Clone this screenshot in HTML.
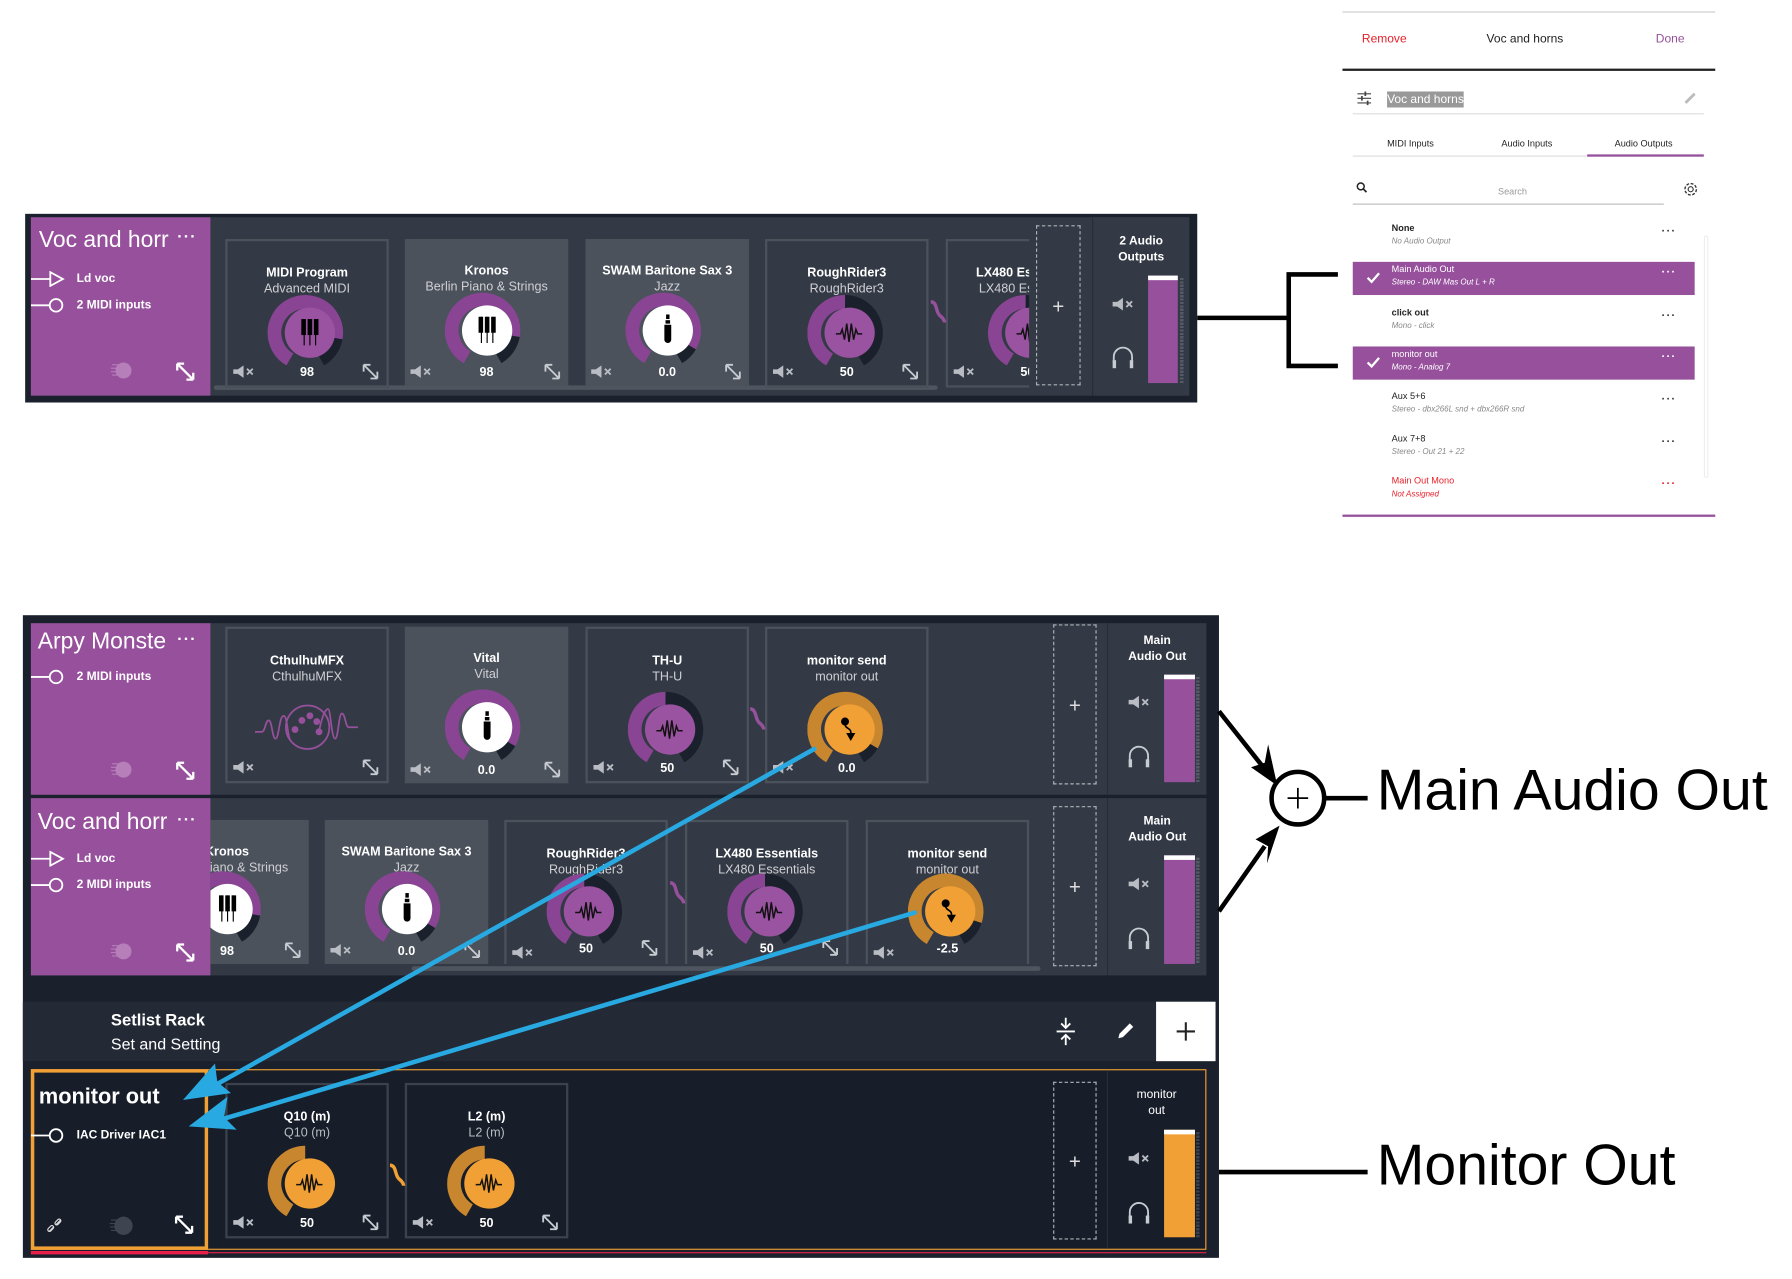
<!DOCTYPE html>
<html><head><meta charset="utf-8"><style>
*{margin:0;padding:0;box-sizing:border-box}
html,body{width:1792px;height:1279px;overflow:hidden;background:#fff}
#w{position:absolute;left:0;top:0;width:1559px;height:1113px;transform:scale(1.1435);transform-origin:0 0;font-family:"Liberation Sans Narrow","Liberation Sans",sans-serif}
.a{position:absolute}
.card{position:absolute;width:143px;text-align:center;color:#fff;overflow:hidden}
.d{background:#333a45;border:2px solid #4b525c}
.d3{background:#171e29;border:2px solid #3b424d}
.l{background:#4b525c}
.t{font-weight:bold;font-size:11px;margin-top:22px;white-space:nowrap}
.s{font-size:11px;color:#d0d0d4;margin-top:2px;white-space:nowrap}
.kn{position:absolute;left:35px;width:70px;height:70px}
.mu{position:absolute;left:4px;bottom:6px;width:20px;height:12px}
.v{position:absolute;left:0;right:0;bottom:5px;font-size:11px;font-weight:bold}
.ex{position:absolute;right:6px;bottom:4px;width:16px;height:16px}
.sb{position:absolute;background:#96509c;color:#fff}
.sb .tt{position:absolute;left:7px;top:9px;font-size:20px;white-space:nowrap}
.sb .dots{position:absolute;right:12px;top:8px;font-size:14px;font-weight:bold;letter-spacing:1px}
.io{position:absolute;left:0;font-size:10.5px;font-weight:bold;white-space:nowrap}
.io svg{vertical-align:middle;margin-right:10px}
.out{position:absolute;text-align:center;color:#fff;font-size:10.5px;font-weight:bold;line-height:14px;border-left:1px solid #262d38}
.add{position:absolute;border:1px dashed #aeb2b8;color:#ddd;font-size:18px;text-align:center}
.rp{position:absolute;font-size:10px;color:#222}
.row{position:absolute;left:1183px;width:299px;height:29px}
.row .n{position:absolute;left:34px;top:2px;font-size:8px;font-weight:bold;color:#222}
.row .i{position:absolute;left:34px;top:15px;font-size:7px;font-style:italic;color:#888}
.row .dd{position:absolute;left:270px;top:4px;font-size:10px;font-weight:bold;color:#333;letter-spacing:1px}
.row.h{background:#96509c}
.row.h .n,.row.h .i,.row.h .dd{color:#fff}
.big{font-family:"Liberation Sans",sans-serif}
</style></head><body><div id="w">

<div class="a" style="left:22px;top:187px;width:1025px;height:165px;background:#1a212c"></div>
<div class="a" style="left:27px;top:190px;width:1013px;height:156px;background:#333a45"></div>
<div class="a" style="left:187px;top:337px;width:633px;height:4px;background:#4e555f;border-radius:2px"></div>
<div class="sb" style="left:27px;top:190px;width:157px;height:156px">
 <div class="tt">Voc and horr</div><div class="dots">···</div>
 <div class="io" style="top:47px"><svg width="30" height="14"><path d="M0 7h17M17 1l11 6-11 6z" stroke="#fff" stroke-width="1.6" fill="none"/></svg>Ld voc</div>
 <div class="io" style="top:70px"><svg width="30" height="14"><path d="M0 7h16" stroke="#fff" stroke-width="1.6"/><circle cx="22" cy="7" r="5.5" stroke="#fff" stroke-width="1.6" fill="none"/></svg>2 MIDI inputs</div>
 <svg class="a" style="left:68px;top:126px" width="22" height="16"><circle cx="13" cy="8" r="7" fill="#b67fba"/><path d="M3 3h6M2 6h6M2 9h6M3 12h6" stroke="#b67fba"/></svg>
 <svg class="a" style="left:126px;top:126px" width="18" height="18"><path d="M2 2L16 16M2 2h6M2 2v6M16 16h-6M16 16v-6" stroke="#fff" stroke-width="2" fill="none"/></svg>
</div>
<div class="card d" style="left:197px;top:209px;height:130px"><div class="t">MIDI Program</div><div class="s">Advanced MIDI</div><div class="kn k p v98 piano pc" style="top:44px"></div><svg class="mu"></svg><div class="v">98</div><svg class="ex"></svg></div>
<div class="card l" style="left:354px;top:209px;height:128px"><div class="t">Kronos</div><div class="s">Berlin Piano &amp; Strings</div><div class="kn k p v98 piano w" style="top:44px"></div><svg class="mu"></svg><div class="v">98</div><svg class="ex"></svg></div>
<div class="card l" style="left:512px;top:209px;height:128px"><div class="t">SWAM Baritone Sax 3</div><div class="s">Jazz</div><div class="kn k p v0 jack w" style="top:44px"></div><svg class="mu"></svg><div class="v">0.0</div><svg class="ex"></svg></div>
<div class="card d" style="left:669px;top:209px;height:130px"><div class="t">RoughRider3</div><div class="s">RoughRider3</div><div class="kn k p v50 wave" style="top:44px"></div><svg class="mu"></svg><div class="v">50</div><svg class="ex"></svg></div>
<div class="a" style="left:827px;top:209px;width:73px;height:130px;overflow:hidden"><div class="card d" style="left:0;top:0;height:130px"><div class="t">LX480 Essentials</div><div class="s">LX480 Essentials</div><div class="kn k p v50 wave" style="top:44px"></div><svg class="mu"></svg><div class="v">50</div><svg class="ex"></svg></div></div>
<svg class="a" style="left:812px;top:262px" width="16" height="22"><path d="M2 2c6 0 4 9 8 12s4 6 4 6" stroke="#96509c" stroke-width="3" fill="none"/></svg>
<div class="add" style="left:906px;top:197px;width:39px;height:140px;line-height:140px">+</div>
<div class="out" style="left:955px;top:190px;width:85px;height:156px;background:#333a45;padding-top:14px">2 Audio<br>Outputs</div>
<svg class="a mu2" style="left:969px;top:259px" width="26" height="14"></svg>
<svg class="a hp" style="left:971px;top:302px" width="22" height="22"></svg>
<div class="a" style="left:1004px;top:241px;width:26px;height:94px;background:#96509c;border-top:4px solid #fff"></div>
<div class="a" style="left:1032px;top:243px;width:3px;height:92px;background:repeating-linear-gradient(#555c66 0 2px,#333a45 2px 3px)"></div>

<div class="a" style="left:1174px;top:10px;width:326px;height:1px;background:#ccc"></div>
<div class="rp" style="left:1191px;top:28px;color:#e8202a;font-size:10.5px">Remove</div>
<div class="rp" style="left:1300px;top:28px;font-size:10.5px">Voc and horns</div>
<div class="rp" style="left:1448px;top:28px;color:#96509c;font-size:10.5px">Done</div>
<div class="a" style="left:1174px;top:60px;width:326px;height:1.5px;background:#222"></div>
<svg class="a" style="left:1187px;top:80px" width="13" height="12"><path d="M0 2h12M0 6h12M0 10h12" stroke="#444"/><path d="M7 0v4M4 4v4M9 8v4" stroke="#444" stroke-width="1.5"/></svg>
<div class="a" style="left:1213px;top:80px;height:14px;background:#999;color:#fff;font-size:10.5px;line-height:14px">Voc and horns</div>
<svg class="a" style="left:1472px;top:80px" width="12" height="12"><path d="M2 10L10 2" stroke="#bbb" stroke-width="2.5"/></svg>
<div class="a" style="left:1183px;top:99px;width:307px;height:1px;background:#ddd"></div>
<div class="rp" style="left:1213px;top:121px;font-size:8px">MIDI Inputs</div>
<div class="rp" style="left:1313px;top:121px;font-size:8px">Audio Inputs</div>
<div class="rp" style="left:1412px;top:121px;font-size:8px">Audio Outputs</div>
<div class="a" style="left:1183px;top:136px;width:307px;height:1px;background:#ddd"></div>
<div class="a" style="left:1388px;top:135px;width:102px;height:2px;background:#96509c"></div>
<svg class="a" style="left:1186px;top:159px" width="10" height="10"><circle cx="4" cy="4" r="3" stroke="#222" stroke-width="1.3" fill="none"/><path d="M6 6l3 3" stroke="#222" stroke-width="1.5"/></svg>
<div class="rp" style="left:1310px;top:163px;font-size:8px;color:#999">Search</div>
<div class="a" style="left:1183px;top:178px;width:272px;height:1px;background:#bbb"></div>
<svg class="a" style="left:1471px;top:158px" width="15" height="15"><circle cx="7.5" cy="7.5" r="5" stroke="#333" stroke-width="1.2" fill="none" stroke-dasharray="2.5 1.4"/><circle cx="7.5" cy="7.5" r="2.2" stroke="#333" stroke-width="1" fill="none"/></svg>
<div class="a" style="left:1490px;top:206px;width:4px;height:212px;border:1px solid #eee;border-radius:2px"></div>
<div class="row" style="top:193px"><div class="n">None</div><div class="i">No Audio Output</div><div class="dd">···</div></div>
<div class="row h" style="top:229px"><svg class="a" style="left:12px;top:9px" width="12" height="10"><path d="M1 5l3.5 3.5L11 1" stroke="#fff" stroke-width="2" fill="none"/></svg><div class="n" style="font-weight:normal">Main Audio Out</div><div class="i">Stereo - DAW Mas Out L + R</div><div class="dd">···</div></div>
<div class="row" style="top:267px"><div class="n">click out</div><div class="i">Mono - click</div><div class="dd">···</div></div>
<div class="row h" style="top:303px"><svg class="a" style="left:12px;top:9px" width="12" height="10"><path d="M1 5l3.5 3.5L11 1" stroke="#fff" stroke-width="2" fill="none"/></svg><div class="n" style="font-weight:normal">monitor out</div><div class="i">Mono - Analog 7</div><div class="dd">···</div></div>
<div class="row" style="top:340px"><div class="n" style="font-weight:normal">Aux 5+6</div><div class="i">Stereo - dbx266L snd + dbx266R snd</div><div class="dd">···</div></div>
<div class="row" style="top:377px"><div class="n" style="font-weight:normal">Aux 7+8</div><div class="i">Stereo - Out 21 + 22</div><div class="dd">···</div></div>
<div class="row" style="top:414px"><div class="n" style="color:#e8202a;font-weight:normal">Main Out Mono</div><div class="i" style="color:#e8202a">Not Assigned</div><div class="dd" style="color:#e8202a">···</div></div>
<div class="a" style="left:1174px;top:450px;width:326px;height:2px;background:#96509c"></div>

<div class="a" style="left:20px;top:538px;width:1046px;height:562px;background:#1a212c"></div>
<div class="a" style="left:27px;top:545px;width:1028px;height:150px;background:#333a45"></div>
<div class="sb" style="left:27px;top:545px;width:157px;height:150px">
 <div class="tt" style="left:6px;top:5px">Arpy Monste</div><div class="dots" style="top:5px">···</div>
 <div class="io" style="top:40px"><svg width="30" height="14"><path d="M0 7h16" stroke="#fff" stroke-width="1.6"/><circle cx="22" cy="7" r="5.5" stroke="#fff" stroke-width="1.6" fill="none"/></svg>2 MIDI inputs</div>
 <svg class="a" style="left:68px;top:120px" width="22" height="16"><circle cx="13" cy="8" r="7" fill="#b67fba"/><path d="M3 3h6M2 6h6M2 9h6M3 12h6" stroke="#b67fba"/></svg>
 <svg class="a" style="left:126px;top:120px" width="18" height="18"><path d="M2 2L16 16M2 2h6M2 2v6M16 16h-6M16 16v-6" stroke="#fff" stroke-width="2" fill="none"/></svg>
</div>
<div class="card d" style="left:197px;top:548px;height:137px"><div class="t">CthulhuMFX</div><div class="s">CthulhuMFX</div>
 <svg class="a" style="left:22px;top:62px" width="100" height="50"><path d="M2 28h6c3 0 3-10 6-10s3 16 6 16 3-20 7-20 3 22 7 22M58 28c3-16 6-20 8-20s3 26 6 26 3-22 6-22 3 12 6 12h8" stroke="#96509c" stroke-width="1.5" fill="none"/><circle cx="48" cy="24" r="19" stroke="#96509c" stroke-width="1.5" fill="none"/><circle cx="43" cy="18" r="3" fill="#96509c"/><circle cx="50" cy="14" r="3" fill="#96509c"/><circle cx="56" cy="19" r="3" fill="#96509c"/><circle cx="37" cy="26" r="3" fill="#96509c"/><circle cx="58" cy="28" r="3" fill="#96509c"/></svg>
 <svg class="mu"></svg><svg class="ex"></svg></div>
<div class="card l" style="left:354px;top:548px;height:137px"><div class="t">Vital</div><div class="s">Vital</div><div class="kn k p v0 jack w" style="top:52px"></div><svg class="mu"></svg><div class="v">0.0</div><svg class="ex"></svg></div>
<div class="card d" style="left:512px;top:548px;height:137px"><div class="t">TH-U</div><div class="s">TH-U</div><div class="kn k p v50 wave" style="top:52px"></div><svg class="mu"></svg><div class="v">50</div><svg class="ex"></svg></div>
<div class="card d" style="left:669px;top:548px;height:137px"><div class="t">monitor send</div><div class="s">monitor out</div><div class="kn k o v0 snd" style="top:52px"></div><svg class="mu"></svg><div class="v">0.0</div><svg class="ex" style="display:none"></svg></div>
<svg class="a" style="left:654px;top:618px" width="16" height="22"><path d="M2 2c6 0 4 9 8 12s4 6 4 6" stroke="#96509c" stroke-width="3" fill="none"/></svg>
<div class="add" style="left:921px;top:546px;width:38px;height:140px;line-height:140px">+</div>
<div class="out" style="left:968px;top:545px;width:87px;height:150px;padding-top:8px">Main<br>Audio Out</div>
<svg class="a mu2" style="left:983px;top:607px" width="26" height="14"></svg>
<svg class="a hp" style="left:985px;top:651px" width="22" height="22"></svg>
<div class="a" style="left:1018px;top:590px;width:27px;height:94px;background:#96509c;border-top:4px solid #fff"></div>
<div class="a" style="left:1046px;top:592px;width:3px;height:92px;background:repeating-linear-gradient(#555c66 0 2px,#333a45 2px 3px)"></div>
<div class="a" style="left:27px;top:698px;width:1028px;height:155px;background:#333a45"></div>
<div class="a" style="left:184px;top:698px;width:726px;height:145px;overflow:hidden">
 <div class="card l" style="left:-57px;top:19px;height:126px"><div class="t">Kronos</div><div class="s">Berlin Piano &amp; Strings</div><div class="kn k p v98 piano w" style="top:42px"></div><svg class="mu"></svg><div class="v">98</div><svg class="ex"></svg></div>
 <div class="card l" style="left:100px;top:19px;height:126px"><div class="t">SWAM Baritone Sax 3</div><div class="s">Jazz</div><div class="kn k p v0 jack w" style="top:42px"></div><svg class="mu"></svg><div class="v">0.0</div><svg class="ex"></svg></div>
 <div class="card d" style="left:257px;top:19px;height:130px"><div class="t">RoughRider3</div><div class="s">RoughRider3</div><div class="kn k p v50 wave" style="top:42px"></div><svg class="mu"></svg><div class="v" style="bottom:9px">50</div><svg class="ex" style="bottom:8px"></svg></div>
 <div class="card d" style="left:415px;top:19px;height:130px"><div class="t">LX480 Essentials</div><div class="s">LX480 Essentials</div><div class="kn k p v50 wave" style="top:42px"></div><svg class="mu"></svg><div class="v" style="bottom:9px">50</div><svg class="ex" style="bottom:8px"></svg></div>
 <div class="card d" style="left:573px;top:19px;height:130px"><div class="t">monitor send</div><div class="s">monitor out</div><div class="kn k o v10 snd" style="top:42px"></div><svg class="mu"></svg><div class="v" style="bottom:9px">-2.5</div></div>
 <svg class="a" style="left:400px;top:72px" width="16" height="22"><path d="M2 2c6 0 4 9 8 12s4 6 4 6" stroke="#96509c" stroke-width="3" fill="none"/></svg>
</div>
<div class="a" style="left:360px;top:845px;width:550px;height:4px;background:#4e555f;border-radius:2px"></div>
<div class="sb" style="left:27px;top:698px;width:157px;height:155px">
 <div class="tt" style="left:6px;top:10px">Voc and horr</div><div class="dots" style="top:10px">···</div>
 <div class="io" style="top:46px"><svg width="30" height="14"><path d="M0 7h17M17 1l11 6-11 6z" stroke="#fff" stroke-width="1.6" fill="none"/></svg>Ld voc</div>
 <div class="io" style="top:69px"><svg width="30" height="14"><path d="M0 7h16" stroke="#fff" stroke-width="1.6"/><circle cx="22" cy="7" r="5.5" stroke="#fff" stroke-width="1.6" fill="none"/></svg>2 MIDI inputs</div>
 <svg class="a" style="left:68px;top:126px" width="22" height="16"><circle cx="13" cy="8" r="7" fill="#b67fba"/><path d="M3 3h6M2 6h6M2 9h6M3 12h6" stroke="#b67fba"/></svg>
 <svg class="a" style="left:126px;top:126px" width="18" height="18"><path d="M2 2L16 16M2 2h6M2 2v6M16 16h-6M16 16v-6" stroke="#fff" stroke-width="2" fill="none"/></svg>
</div>
<div class="add" style="left:921px;top:705px;width:38px;height:140px;line-height:140px">+</div>
<div class="out" style="left:968px;top:698px;width:87px;height:155px;padding-top:13px">Main<br>Audio Out</div>
<svg class="a mu2" style="left:983px;top:766px" width="26" height="14"></svg>
<svg class="a hp" style="left:985px;top:810px" width="22" height="22"></svg>
<div class="a" style="left:1018px;top:748px;width:27px;height:95px;background:#96509c;border-top:4px solid #fff"></div>
<div class="a" style="left:1046px;top:750px;width:3px;height:93px;background:repeating-linear-gradient(#555c66 0 2px,#333a45 2px 3px)"></div>
<div class="a" style="left:20px;top:876px;width:1043px;height:52px;background:#232a36"></div>
<div class="a" style="left:97px;top:885px;color:#fff;font-size:14.5px;font-weight:bold">Setlist Rack</div>
<div class="a" style="left:97px;top:905px;color:#fff;font-size:14px">Set and Setting</div>
<svg class="a" style="left:922px;top:889px" width="20" height="26"><path d="M10 1v9M6 6l4 4 4-4M2 13h16M10 25v-9M6 20l4-4 4 4" stroke="#fff" stroke-width="1.6" fill="none"/></svg>
<svg class="a" style="left:975px;top:893px" width="18" height="18"><path d="M3 15l1-4 9-9 3 3-9 9z" fill="#fff"/></svg>
<div class="a" style="left:1011px;top:876px;width:52px;height:52px;background:#fff"></div>
<svg class="a" style="left:1027px;top:892px" width="20" height="20"><path d="M10 2v16M2 10h16" stroke="#222" stroke-width="1.8"/></svg>
<div class="a" style="left:27px;top:935px;width:1028px;height:158px;background:#171e29;border:1px solid #f0a035"></div>
<div class="a" style="left:27px;top:935px;width:155px;height:158px;border:3px solid #f0a035;color:#fff">
 <div class="a" style="left:4px;top:11px;font-size:19px;font-weight:bold;white-space:nowrap">monitor out</div>
 <div class="io" style="top:48px;left:-3px"><svg width="30" height="14"><path d="M0 7h16" stroke="#fff" stroke-width="1.6"/><circle cx="22" cy="7" r="5.5" stroke="#fff" stroke-width="1.6" fill="none"/></svg>IAC Driver IAC1</div>
 <svg class="a" style="left:10px;top:126px" width="16" height="16"><path d="M3 13l4-4M9 7l4-4" stroke="#ddd" stroke-width="1.2"/><rect x="1" y="9" width="6" height="3" rx="1.5" transform="rotate(-45 4 10)" stroke="#ddd" fill="none"/><rect x="8" y="3" width="6" height="3" rx="1.5" transform="rotate(-45 11 5)" stroke="#ddd" fill="none"/></svg>
 <svg class="a" style="left:64px;top:125px" width="24" height="18"><circle cx="14" cy="9" r="8" fill="#3e4550"/><path d="M3 4h7M2 7h7M2 10h7M3 13h7" stroke="#3e4550"/></svg>
 <svg class="a" style="left:122px;top:124px" width="18" height="18"><path d="M2 2L16 16M2 2h6M2 2v6M16 16h-6M16 16v-6" stroke="#fff" stroke-width="2" fill="none"/></svg>
</div>
<div class="a" style="left:27px;top:1094px;width:155px;height:3px;background:#e8204a"></div>
<div class="a" style="left:182px;top:1095px;width:873px;height:1px;background:#e8204a"></div>
<div class="card d3" style="left:197px;top:947px;height:136px"><div class="t">Q10 (m)</div><div class="s" style="color:#b8bcc2">Q10 (m)</div><div class="kn k o v50 wave" style="top:50px"></div><svg class="mu"></svg><div class="v">50</div><svg class="ex"></svg></div>
<div class="card d3" style="left:354px;top:947px;height:136px"><div class="t">L2 (m)</div><div class="s" style="color:#b8bcc2">L2 (m)</div><div class="kn k o v50 wave" style="top:50px"></div><svg class="mu"></svg><div class="v">50</div><svg class="ex"></svg></div>
<svg class="a" style="left:339px;top:1017px" width="16" height="22"><path d="M2 2c6 0 4 9 8 12s4 6 4 6" stroke="#f0a035" stroke-width="3" fill="none"/></svg>
<div class="add" style="left:921px;top:946px;width:38px;height:138px;line-height:138px">+</div>
<div class="out" style="left:968px;top:936px;width:86px;height:156px;padding-top:14px;font-weight:normal">monitor<br>out</div>
<svg class="a mu2" style="left:983px;top:1006px" width="26" height="14"></svg>
<svg class="a hp" style="left:985px;top:1050px" width="22" height="22"></svg>
<div class="a" style="left:1018px;top:988px;width:27px;height:94px;background:#f0a035;border-top:4px solid #fff"></div>
<div class="a" style="left:1046px;top:990px;width:3px;height:92px;background:repeating-linear-gradient(#3c434e 0 2px,#171e29 2px 3px)"></div>

<svg class="a" style="left:0;top:0" width="1559" height="1113">
 <g stroke="#29a9e1" stroke-width="4" fill="none" stroke-linecap="round">
  <path d="M712 655L190 948"/><path d="M800 798L197 978"/>
 </g>
 <polygon points="160,962 202,956 190,946 188,930" fill="#29a9e1"/>
 <polygon points="165,985 207,988 196,977 199,959" fill="#29a9e1"/>
 <g stroke="#000" stroke-width="4" fill="none">
  <path d="M1047 278H1127M1127 240V320M1125 240H1170M1125 320H1170"/>
  <path d="M1066 622L1104 670M1066 797L1106 740"/>
  <circle cx="1135" cy="698" r="23"/>
  <path d="M1159 698H1196M1066 1025H1196"/>
 </g>
 <path d="M1135 689v18M1126 698h18" stroke="#000" stroke-width="1.5"/>
 <polygon points="1117,687 1094,671 1106,667 1109,651" fill="#000"/>
 <polygon points="1119,722 1098,734 1109,740 1108,755" fill="#000"/>
</svg>
<div class="a big" style="left:1204px;top:662px;font-size:50px;color:#000;white-space:nowrap">Main Audio Out</div>
<div class="a big" style="left:1204px;top:990px;font-size:50px;color:#000;white-space:nowrap">Monitor Out</div>
</div>
<script>
var MU='<path d="M1 4h4l5-3.5v11L5 8H1z" fill="#b9bdc3"/><path d="M13 3.5l5 5M18 3.5l-5 5" stroke="#b9bdc3" stroke-width="1.6"/>';
document.querySelectorAll('.mu').forEach(function(e){e.setAttribute('viewBox','0 0 20 12');e.innerHTML=MU;});
document.querySelectorAll('.mu2').forEach(function(e){e.setAttribute('viewBox','0 -1 20 14');e.innerHTML=MU;});
document.querySelectorAll('.ex').forEach(function(e){e.setAttribute('viewBox','0 0 16 16');e.innerHTML='<path d="M2 2L14 14M2 2h6M2 2v6M14 14h-6M14 14v-6" stroke="#c8ccd2" stroke-width="1.6" fill="none"/>';});
document.querySelectorAll('.hp').forEach(function(e){e.innerHTML='<path d="M3 16v-6a8 8 0 0 1 16 0v6" stroke="#c8ccd2" stroke-width="1.6" fill="none"/><rect x="2" y="13" width="3" height="7" fill="#c8ccd2"/><rect x="17" y="13" width="3" height="7" fill="#c8ccd2"/>';});
function pt(a,r,cx,cy){a=a*Math.PI/180;return [(cx+r*Math.sin(a)).toFixed(2),(cy-r*Math.cos(a)).toFixed(2)];}
function arc(a1,a2,r,cx,cy){var p1=pt(a1,r,cx,cy),p2=pt(a2,r,cx,cy);var sw=((a2-a1)+360)%360;return 'M'+p1+' A'+r+' '+r+' 0 '+(sw>180?1:0)+' 1 '+p2;}
document.querySelectorAll('.kn').forEach(function(e){
 var c=e.className,o=c.indexOf(' o ')>=0,w=/\bw\b/.test(c);
 var va=/v98/.test(c)?100:/v50/.test(c)?0:/v10/.test(c)?108:120;
 var ring=o?'#c8862e':'#8a4494',inner=w?'#fff':(o?'#f0a035':'#9a53a1'),dark=o&&e.closest('.d3')?'#171e29':'#1a212c';
 var cx=33,cy=36,s='<svg width="70" height="70" viewBox="0 0 70 70">';
 s+='<path d="'+arc(210,va,27,cx,cy)+'" stroke="'+ring+'" stroke-width="12" fill="none"/>';
 s+='<path d="'+arc(va,150,27,cx,cy)+'" stroke="'+dark+'" stroke-width="12" fill="none"/>';
 s+='<circle cx="37" cy="36" r="22" fill="'+inner+'"/>';
 if(/piano/.test(c)){s+='<rect x="27" y="24" width="20" height="23" fill="'+(w?'#fff':'none')+'"/><path d="M32 24v23M37 24v23M42 24v23" stroke="#000" stroke-width="1"/><rect x="29.5" y="24" width="4" height="14" fill="#000"/><rect x="35" y="24" width="4" height="14" fill="#000"/><rect x="40.5" y="24" width="4" height="14" fill="#000"/>';}
 if(/jack/.test(c)){s+='<rect x="35.5" y="22" width="3" height="4" fill="#000"/><rect x="35" y="27" width="4" height="3" fill="#000"/><path d="M34 31h6v13a3 3 0 0 1-6 0z" fill="#000"/>';}
 if(/wave/.test(c)){s+='<path d="M25 37h4l1.5-4 2 9 2-14 2 16 2-16 2 14 2-9 1.5 4h4" stroke="#111" stroke-width="1.3" fill="none"/>';}
 if(/snd/.test(c)){s+='<circle cx="33" cy="29" r="3.5" fill="#000"/><path d="M33 31c0 5 6 3 5 9" stroke="#000" stroke-width="1.4" fill="none"/><path d="M34 39h8l-4 7z" fill="#000"/>';}
 e.innerHTML=s+'</svg>';
});
</script>
</body></html>
